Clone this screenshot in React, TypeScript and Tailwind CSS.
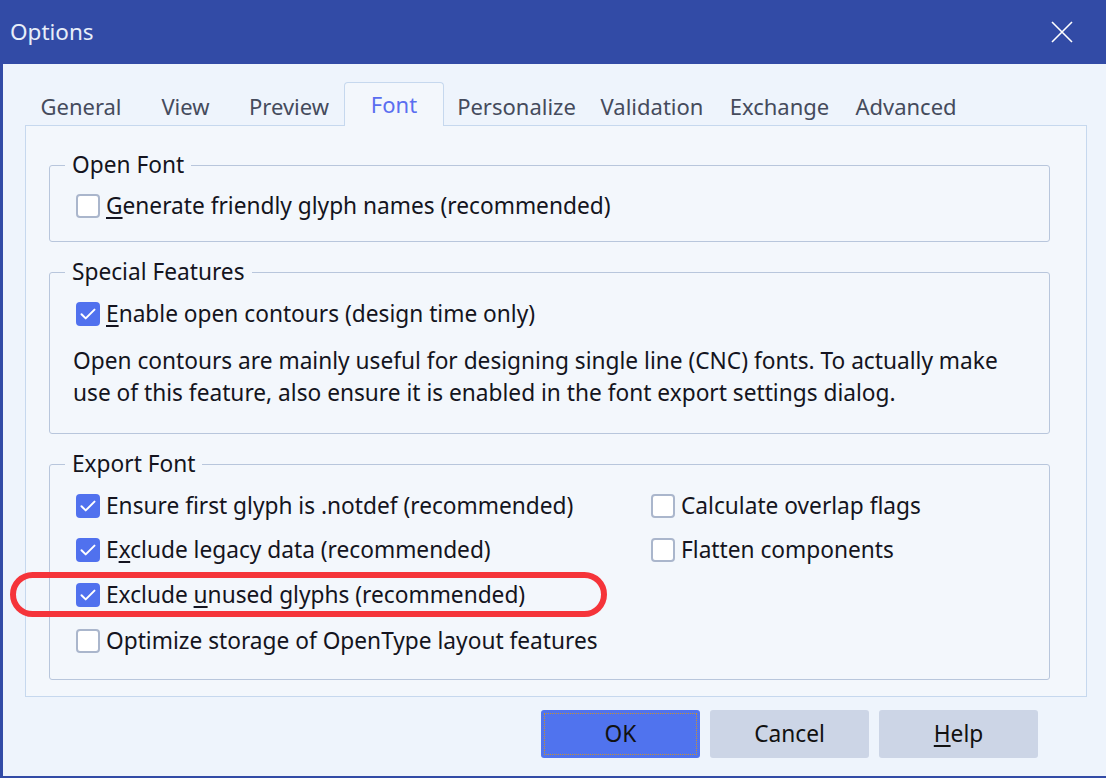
import { ReactNode } from 'react'

const tabs = [
  { label: 'General', w: 'w-[112px]' },
  { label: 'View', w: 'w-[97px]' },
  { label: 'Preview', w: 'w-[110px]' },
  { label: 'Font', w: 'w-[100px]', active: true },
  { label: 'Personalize', w: 'w-[145px]' },
  { label: 'Validation', w: 'w-[126px]' },
  { label: 'Exchange', w: 'w-[129px]' },
  { label: 'Advanced', w: 'w-[124px]' },
]

function Check({ checked }: { checked?: boolean }) {
  if (checked) {
    return (
      <span className="flex h-[24px] w-[24px] shrink-0 items-center justify-center rounded-[4px] bg-[#5071ee]">
        <svg width="18" height="18" viewBox="0 0 18 18" fill="none">
          <path d="M2.5 9.2l4.2 4.2L15.5 4.6" stroke="white" strokeWidth="2" strokeLinecap="round" strokeLinejoin="round" />
        </svg>
      </span>
    )
  }
  return <span className="h-[24px] w-[24px] shrink-0 rounded-[4px] border-2 border-[#aab6cc] bg-white" />
}

function Row({ checked, children }: { checked?: boolean; children: ReactNode }) {
  return (
    <div className="flex h-[44.7px] items-center gap-[6px]">
      <Check checked={checked} />
      <span className="whitespace-nowrap">{children}</span>
    </div>
  )
}

function Group({ title, className, children }: { title: string; className: string; children: ReactNode }) {
  return (
    <div className={`rounded-[3px] border border-[#b8c6dc] ${className}`}>
      <span className="-mt-[16px] ml-[15px] block w-fit bg-[#f3f7fc] px-[7px] leading-[30px]">{title}</span>
      {children}
    </div>
  )
}

export default function App() {
  return (
    <div className="flex h-[778px] w-[1106px] flex-col overflow-hidden bg-[#eef4fc] font-['Noto_Sans',sans-serif] text-[22.7px] text-[#141420]">
      {/* title bar */}
      <div className="flex h-[64px] shrink-0 items-center justify-between bg-[#324ba6] pl-[10px] pr-[33px]">
        <span className="text-[22.5px] text-[#e8eef9]">Options</span>
        <svg width="22" height="22" viewBox="0 0 22 22">
          <path d="M1 1l20 20M21 1L1 21" stroke="white" strokeWidth="1.6" />
        </svg>
      </div>

      <div className="flex flex-1 flex-col border-b-2 border-l-[3px] border-[#324ba6] pt-[18px]">
        {/* tabs */}
        <div className="ml-[22px] flex h-[43px] text-[22px] text-[#454b5c]">
          {tabs.map((t) =>
            t.active ? (
              <div
                key={t.label}
                className={`${t.w} relative z-10 -mb-px flex items-start justify-center rounded-t-[4px] border border-b-0 border-[#c6d8ee] bg-[#f3f7fc] pt-[6px] leading-[30px] text-[#5a6ef0]`}
              >
                {t.label}
              </div>
            ) : (
              <div key={t.label} className={`${t.w} flex items-start justify-center pt-[9px] leading-[30px]`}>
                {t.label}
              </div>
            )
          )}
        </div>

        {/* panel */}
        <div className="ml-[22px] mr-[19px] flex h-[572px] flex-col gap-[30px] border border-[#c6d8ee] bg-[#f3f7fc] pl-[23px] pr-[36px] pt-[39px]">
          <Group title="Open Font" className="pb-[12px]">
            <div className="mt-[4px] pl-[26px]">
              <Row>
                <u className="underline-offset-[3px]">G</u>enerate friendly glyph names (recommended)
              </Row>
            </div>
          </Group>

          <Group title="Special Features" className="pb-[24px]">
            <div className="mt-[5px] pl-[26px]">
              <Row checked>
                <u className="underline-offset-[3px]">E</u>nable open contours (design time only)
              </Row>
            </div>
            <p className="mt-[9px] pl-[23px] pr-[20px] leading-[32px]">
              Open contours are mainly useful for designing single line (CNC) fonts. To actually make use of this feature, also ensure it is enabled in the font export settings dialog.
            </p>
          </Group>

          <Group title="Export Font" className="pb-[16px]">
            <div className="mt-[4px] grid grid-cols-[575px_1fr] pl-[26px]">
              <div>
                <Row checked>Ensure first glyph is .notdef (recommended)</Row>
                <Row checked>
                  E<u className="underline-offset-[3px]">x</u>clude legacy data (recommended)
                </Row>
                <div className="-ml-[66px] -mt-[1px] mb-[1px] w-fit rounded-full border-[6px] border-[#f5343a] pl-[60px] pr-[76px]">
                  <div className="-my-[5.5px]">
                    <Row checked>
                      Exclude <u className="underline-offset-[3px]">u</u>nused glyphs (recommended)
                    </Row>
                  </div>
                </div>
                <Row>Optimize storage of OpenType layout features</Row>
              </div>
              <div>
                <Row>Calculate overlap flags</Row>
                <Row>Flatten components</Row>
              </div>
            </div>
          </Group>
        </div>

        {/* buttons */}
        <div className="mr-[68px] mt-[13px] flex justify-end gap-[10px]">
          <button className="flex h-[48px] w-[159px] items-center justify-center rounded-[3px] bg-[#5073ee] p-[3px]">
            <span className="flex h-full w-full items-center justify-center border border-dotted border-[#c9912e] text-[#111]">OK</span>
          </button>
          <button className="h-[48px] w-[159px] rounded-[3px] bg-[#ccd5e6] text-[#111]">Cancel</button>
          <button className="h-[48px] w-[159px] rounded-[3px] bg-[#ccd5e6] text-[#111]">
            <u className="underline-offset-[3px]">H</u>elp
          </button>
        </div>
      </div>
    </div>
  )
}
